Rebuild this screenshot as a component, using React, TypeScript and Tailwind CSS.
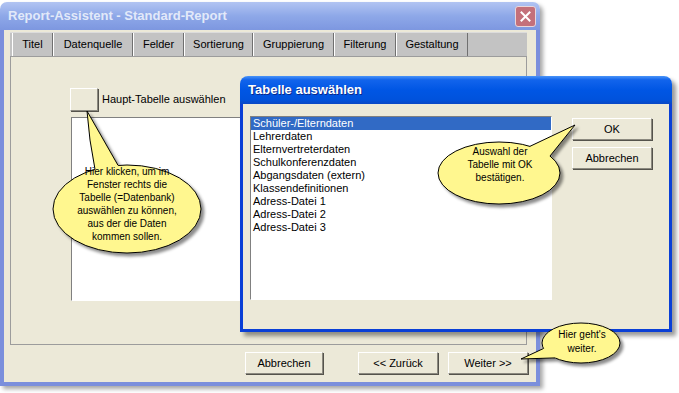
import React from "react";

const tabs = [
  { label: "Titel", w: "w-[41px]" },
  { label: "Datenquelle", w: "w-[80px]" },
  { label: "Felder", w: "w-[51px]" },
  { label: "Sortierung", w: "w-[69px]" },
  { label: "Gruppierung", w: "w-[81px]" },
  { label: "Filterung", w: "w-[62px]" },
  { label: "Gestaltung", w: "w-[72px]" },
];

const tables = [
  "Schüler-/Elterndaten",
  "Lehrerdaten",
  "Elternvertreterdaten",
  "Schulkonferenzdaten",
  "Abgangsdaten (extern)",
  "Klassendefinitionen",
  "Adress-Datei 1",
  "Adress-Datei 2",
  "Adress-Datei 3",
];

function Btn({ children, className = "" }: { children?: React.ReactNode; className?: string }) {
  return (
    <div
      className={`flex items-center justify-center bg-[#ece9d8] border border-t-white border-l-white border-r-[#8c8a80] border-b-[#8c8a80] shadow-[1px_1px_0_#55534c] text-[11px] text-black ${className}`}
    >
      {children}
    </div>
  );
}

// yellow speech bubbles drawn over the windows
function Bubbles() {
  return (
    <svg className="absolute left-0 top-0 pointer-events-none" width="679" height="393">
      <defs>
        <filter id="sh" x="-20%" y="-20%" width="140%" height="140%">
          <feDropShadow dx="3" dy="3" stdDeviation="1.4" floodColor="#000" floodOpacity="0.45" />
        </filter>
      </defs>

      <g filter="url(#sh)">
        <ellipse cx="127" cy="209" rx="74" ry="44" fill="#fff78f" stroke="#000" />
        <path d="M95 169.3 Q89 140 87 111 L118 165.3 L110 185 Z" fill="#fff78f" />
        <path d="M95 169.3 Q89 140 87 111 L118 165.3" fill="none" stroke="#000" />
      </g>

      <g filter="url(#sh)">
        <ellipse cx="499" cy="173" rx="61" ry="31" fill="#fff78f" stroke="#000" />
        <path d="M530 146.3 L575 125 L550 156 L530 165 Z" fill="#fff78f" />
        <path d="M530 146.3 L575 125 L550 156" fill="none" stroke="#000" />
      </g>

      <g filter="url(#sh)">
        <ellipse cx="581" cy="343" rx="39" ry="20" fill="#fff78f" stroke="#000" />
        <path d="M543.5 348.5 L521 359 L555 357.9 L565 345 Z" fill="#fff78f" />
        <path d="M543.5 348.5 L521 359 L555 357.9" fill="none" stroke="#000" />
      </g>
    </svg>
  );
}

export default function App() {
  return (
    <div className="relative w-[679px] h-[393px] bg-white overflow-hidden pt-[2px] font-['Liberation_Sans',Arial,sans-serif] text-black">
      {/* Report-Assistent window (inactive) */}
      <div className="w-[540px] h-[384px] flex flex-col rounded-t-[7px] shadow-[3px_3px_4px_rgba(0,0,0,0.35)]">
        <div className="h-[28px] flex items-center justify-between pl-[8px] pr-[4px] rounded-t-[7px] bg-gradient-to-b from-[#b2c4f2] via-[#8ea8e8] to-[#7d97e0]">
          <span className="text-[13px] font-bold text-[#e2e9f9]">Report-Assistent - Standard-Report</span>
          <div className="w-[21px] h-[21px] rounded-[3px] border border-[#e9d6da] bg-[#c4707a] flex items-center justify-center">
            <svg width="11" height="11" viewBox="0 0 11 11">
              <path d="M1.5 1.5 L9.5 9.5 M9.5 1.5 L1.5 9.5" stroke="#fff" strokeWidth="2" strokeLinecap="square" />
            </svg>
          </div>
        </div>

        <div className="flex-1 flex flex-col bg-[#ece9d8] border-x-4 border-b-4 border-[#7b8fdc] pl-[6px] pr-[9px] pt-[2px]">
          {/* tab strip */}
          <div className="h-[24px] flex bg-[#c3c3c3] pl-[2px] border-t border-t-[#dcdcdc]">
            {tabs.map((t) => (
              <div
                key={t.label}
                className={`${t.w} h-full flex items-center justify-center text-[11px] border-l border-l-white border-r border-r-[#707070]`}
              >
                {t.label}
              </div>
            ))}
          </div>

          {/* tab page */}
          <div className="h-[289px] flex flex-col border border-[#9c9c9c] pl-[59px] pt-[31px]">
            <div className="flex items-center gap-[4px]">
              <Btn className="w-[28px] h-[23px]" />
              <span className="text-[11px]">Haupt-Tabelle auswählen</span>
            </div>
            <div className="ml-[1px] mt-[6px] w-[400px] h-[184px] bg-white border border-t-[#808080] border-l-[#808080] border-r-white border-b-white" />
          </div>

          {/* wizard buttons */}
          <div className="flex justify-end items-start mt-[7px] -mr-[1px]">
            <Btn className="w-[78px] h-[22px]">Abbrechen</Btn>
            <Btn className="w-[80px] h-[22px] ml-[35px]">&lt;&lt; Zurück</Btn>
            <Btn className="w-[80px] h-[22px] ml-[10px]">Weiter &gt;&gt;</Btn>
          </div>
        </div>
      </div>

      {/* Tabelle auswählen dialog (active) */}
      <div className="absolute left-[240px] top-[76px] w-[432px] h-[256px] flex flex-col rounded-t-[8px] shadow-[4px_4px_4px_rgba(0,0,0,0.4)]">
        <div className="h-[28px] flex items-center pl-[8px] rounded-t-[8px] bg-[linear-gradient(180deg,#4a94f8_0%,#1264ec_14%,#0056e4_50%,#0052dc_85%,#0a48c4_100%)]">
          <span className="text-[13px] font-bold text-white [text-shadow:1px_1px_0_#0a2a8c]">Tabelle auswählen</span>
        </div>
        <div className="flex-1 flex bg-[#ece9d8] border-x-[3px] border-b-[3px] border-[#0a3fd6] pl-[7px] pt-[12px]">
          <div className="w-[302px] h-[184px] bg-white border border-t-[#808080] border-l-[#808080] border-r-white border-b-white">
            {tables.map((t, i) => (
              <div
                key={t}
                className={`h-[13px] leading-[13px] px-[2px] text-[11px] ${i === 0 ? "bg-[#316ac5] text-white" : ""}`}
              >
                {t}
              </div>
            ))}
          </div>
          <div className="flex flex-col ml-[20px] mt-[2px] gap-[7px]">
            <Btn className="w-[80px] h-[22px]">OK</Btn>
            <Btn className="w-[80px] h-[22px]">Abbrechen</Btn>
          </div>
        </div>
      </div>

      <Bubbles />

      {/* bubble texts */}
      <div className="absolute left-[57px] top-[165px] w-[140px] text-center text-[10px] leading-[13px]">
        Hier klicken, um im
        <br />
        Fenster rechts die
        <br />
        Tabelle (=Datenbank)
        <br />
        auswählen zu können,
        <br />
        aus der die Daten
        <br />
        kommen sollen.
      </div>
      <div className="absolute left-[450px] top-[145px] w-[100px] text-center text-[10px] leading-[13px]">
        Auswahl der
        <br />
        Tabelle mit OK
        <br />
        bestätigen.
      </div>
      <div className="absolute left-[547px] top-[328px] w-[70px] text-center text-[10px] leading-[14px]">
        Hier geht's
        <br />
        weiter.
      </div>
    </div>
  );
}
